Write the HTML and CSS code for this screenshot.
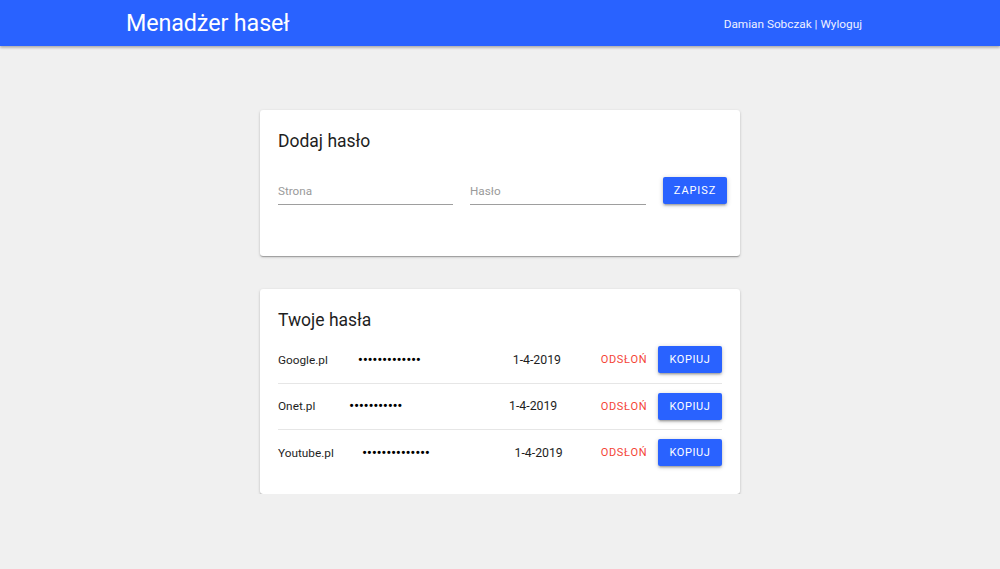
FILE: index.html
```html
<!DOCTYPE html>
<html lang="pl">
<head>
<meta charset="utf-8">
<title>Menadżer haseł</title>
<link rel="stylesheet" href="styles.css">
</head>
<body>
<header class="appbar">
  <h1 class="brand">Menadżer haseł</h1>
  <div class="user">Damian Sobczak | Wyloguj</div>
</header>
<main class="content">
  <section class="card card-add">
    <h2 class="card-title">Dodaj hasło</h2>
    <form class="add-form">
      <label class="field"><span class="field-label">Strona</span></label>
      <label class="field"><span class="field-label">Hasło</span></label>
      <button type="button" class="btn btn-primary btn-save">Zapisz</button>
    </form>
  </section>
  <section class="card card-list">
    <h2 class="card-title">Twoje hasła</h2>
    <ul class="entries">
      <li class="entry">
        <span class="entry-site">Google.pl</span>
        <div class="entry-mid">
          <span class="entry-secret">•••••••••••••</span>
          <span class="entry-spacer"></span>
          <span class="entry-date">1-4-2019</span>
        </div>
        <button type="button" class="btn btn-text">Odsłoń</button>
        <button type="button" class="btn btn-primary">Kopiuj</button>
      </li>
      <li class="entry">
        <span class="entry-site">Onet.pl</span>
        <div class="entry-mid">
          <span class="entry-secret">•••••••••••</span>
          <span class="entry-spacer"></span>
          <span class="entry-date">1-4-2019</span>
        </div>
        <button type="button" class="btn btn-text">Odsłoń</button>
        <button type="button" class="btn btn-primary">Kopiuj</button>
      </li>
      <li class="entry">
        <span class="entry-site">Youtube.pl</span>
        <div class="entry-mid">
          <span class="entry-secret">••••••••••••••</span>
          <span class="entry-spacer"></span>
          <span class="entry-date">1-4-2019</span>
        </div>
        <button type="button" class="btn btn-text">Odsłoń</button>
        <button type="button" class="btn btn-primary">Kopiuj</button>
      </li>
    </ul>
  </section>
</main>
</body>
</html>
```

FILE: styles.css
```css
* { box-sizing: border-box; }

html, body {
  margin: 0;
  padding: 0;
  background: #f0f0f0;
  font-family: Roboto, "Liberation Sans", Arial, sans-serif;
  color: #212121;
}

.appbar {
  height: 46px;
  background: #2962ff;
  color: #fff;
  display: flex;
  align-items: center;
  justify-content: space-between;
  padding: 0 138px 0 126px;
  box-shadow: 0 1px 3px rgba(0,0,0,.22), 0 2px 2px rgba(0,0,0,.12);
  position: relative;
}

.brand {
  margin: 0;
  font-size: 23.3px;
  font-weight: 400;
  line-height: 46px;
  letter-spacing: -0.1px;
}

.user {
  font-size: 11.8px;
  line-height: 46px;
  padding-top: 1px;
  color: #eef0ff;
}

.content {
  display: flex;
  flex-direction: column;
  align-items: center;
  gap: 33px;
  padding-top: 64px;
}

.card {
  width: 480px;
  background: #fff;
  border-radius: 3px;
  padding: 20px 18px 18px;
  box-shadow: 0 1px 3px 0 rgba(0,0,0,.2), 0 1px 1px 0 rgba(0,0,0,.14), 0 2px 1px -1px rgba(0,0,0,.12);
}

.card-title {
  margin: 0;
  font-size: 17.5px;
  font-weight: 400;
  line-height: 23px;
  color: #1e1e1e;
}

.card-add .card-title { margin-bottom: 24px; }
.card-list .card-title { margin-bottom: 5px; }

.add-form {
  display: grid;
  grid-template-columns: 175px 176px 64px;
  column-gap: 17px;
  margin: 0 -4px 33px 0;
  align-items: start;
}

.field {
  display: block;
  height: 28px;
  padding-top: 3px;
  border-bottom: 1px solid #9e9e9e;
}

.field-label {
  font-size: 11.7px;
  line-height: 16px;
  color: #9a9a9a;
}

.btn {
  font-family: Roboto, "Liberation Sans", Arial, sans-serif;
  font-size: 11px;
  font-weight: 400;
  letter-spacing: 0.6px;
  text-transform: uppercase;
  border: none;
  cursor: pointer;
  padding: 0 8px;
  height: 27px;
  line-height: 27px;
}

.btn-primary {
  width: 64px;
  background: #2962ff;
  color: #fff;
  border-radius: 2px;
  box-shadow: 0 1px 5px 0 rgba(0,0,0,.2), 0 2px 2px 0 rgba(0,0,0,.14), 0 3px 1px -2px rgba(0,0,0,.12);
}

.btn-save {
  letter-spacing: 0.9px;
}

.btn-text {
  min-width: 64px;
  background: transparent;
  color: #f44336;
  margin-right: 2px;
}

.entries {
  list-style: none;
  margin: 0;
  padding: 0;
}

.entry {
  display: flex;
  align-items: center;
  padding: 9.25px 0;
  border-bottom: 1px solid #e6e6e6;
}

.entry:last-child { border-bottom: none; }

.entry-site {
  font-size: 11.8px;
  color: #1e1e1e;
}

.entry-mid {
  flex: 1;
  display: flex;
  align-items: center;
  justify-content: space-around;
  margin: 0 8px 0 7px;
}

.entry-secret {
  font-size: 15.5px;
  letter-spacing: -0.4px;
  color: #000;
  line-height: 16px;
}

.entry-spacer { width: 0; }

.entry-date {
  font-size: 12.3px;
  color: #1e1e1e;
}
```
